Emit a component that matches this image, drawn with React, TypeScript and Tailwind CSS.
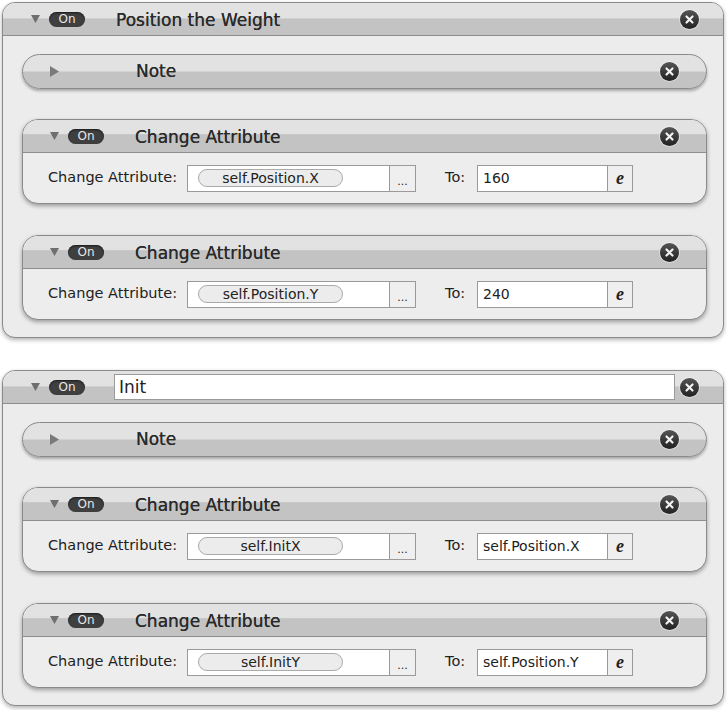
const font = { fontFamily: '"DejaVu Sans", "Liberation Sans", sans-serif' }

function CloseButton() {
  return (
    <div className="flex h-[19px] w-[19px] shrink-0 items-center justify-center rounded-full bg-gradient-to-b from-[#555] to-[#222] shadow-[0_0_0_1px_rgba(255,255,255,0.4)]">
      <svg width="11" height="11" viewBox="0 0 11 11">
        <path d="M2.5 2.5 L8.5 8.5 M8.5 2.5 L2.5 8.5" stroke="#f2f2f2" strokeWidth="2.2" strokeLinecap="round" />
      </svg>
    </div>
  )
}

function OnPill() {
  return (
    <div className="flex h-[15px] w-[36px] shrink-0 items-center justify-center rounded-full bg-[#3f3f3f] text-[12px] leading-none text-[#e8e8e8] shadow-[inset_0_1px_2px_rgba(0,0,0,0.6)]">
      On
    </div>
  )
}

function TriangleDown() {
  return (
    <svg width="9" height="8" viewBox="0 0 9 8" className="shrink-0">
      <path d="M0 0 L9 0 L4.5 8 Z" fill="#6e6e6e" />
    </svg>
  )
}

function TriangleRight() {
  return (
    <svg width="9" height="11" viewBox="0 0 9 11" className="shrink-0">
      <path d="M0 0 L9 5.5 L0 11 Z" fill="#7a7a7a" />
    </svg>
  )
}

function NoteRow() {
  return (
    <div className="flex h-[35px] items-center rounded-full border border-[#8a8a8a] bg-[linear-gradient(#e2e2e2_0%,#e2e2e2_48%,#c3c3c3_52%,#c3c3c3_100%)] pl-[27px] pr-[27px] shadow-[0_2px_3px_rgba(0,0,0,0.3)]">
      <TriangleRight />
      <div className="ml-[77px] pt-[1px] text-[17px] text-[#2a2a2a] [text-shadow:0_0_0.6px_#2a2a2a]">Note</div>
      <div className="flex-1" />
      <CloseButton />
    </div>
  )
}

function ChangeCard({ attr, to }: { attr: string; to: string }) {
  return (
    <div className="overflow-hidden rounded-[16px] border border-[#8a8a8a] bg-[#ededed] shadow-[0_2px_4px_rgba(0,0,0,0.35)]">
      <div className="flex h-[33px] items-center border-b border-[#8e8e8e] bg-[linear-gradient(#e2e2e2_0%,#e2e2e2_42%,#c3c3c3_46%,#c3c3c3_100%)] pl-[27px] pr-[27px]">
        <TriangleDown />
        <div className="ml-[9px]">
          <OnPill />
        </div>
        <div className="ml-[31px] pt-[3px] text-[17px] text-[#2a2a2a] [text-shadow:0_0_0.4px_#2a2a2a]">Change Attribute</div>
        <div className="flex-1" />
        <CloseButton />
      </div>
      <div className="flex h-[50px] items-center pl-[25px] text-[14.5px] text-[#222]">
        <div className="w-[139px]">Change Attribute:</div>
        <div className="flex h-[27px] w-[203px] items-center border border-[#9a9a9a] bg-white pl-[10px]">
          <div className="flex h-[18px] w-[145px] items-center justify-center rounded-full border border-[#aaa] bg-[#ececec] text-[14px] text-[#222]">
            {attr}
          </div>
        </div>
        <div className="flex h-[27px] w-[26px] items-end justify-center border border-l-0 border-[#9a9a9a] bg-[#efefef] pb-[4px] text-[11px] leading-none">
          ...
        </div>
        <div className="ml-[29px] w-[32px]">To:</div>
        <div className="flex h-[27px] w-[131px] items-center border border-[#9a9a9a] bg-white pl-[5px] text-[14px]">
          {to}
        </div>
        <div className="flex h-[27px] w-[25px] items-center justify-center border border-l-0 border-[#9a9a9a] bg-[#efefef]">
          <span className="text-[18px] font-bold italic leading-none text-[#222]" style={{ fontFamily: '"Liberation Serif", serif' }}>
            e
          </span>
        </div>
      </div>
    </div>
  )
}

function Panel({
  title,
  editable,
  cards,
}: {
  title: string
  editable?: boolean
  cards: { attr: string; to: string }[]
}) {
  return (
    <div className="overflow-hidden rounded-[13px] border border-[#8a8a8a] bg-[#ececec] shadow-[0_2px_4px_rgba(0,0,0,0.3)]">
      <div className="flex h-[33px] items-center border-b border-[#8e8e8e] bg-[linear-gradient(#e2e2e2_0%,#e2e2e2_46%,#c3c3c3_50%,#c3c3c3_100%)] pl-[28px] pr-[24px]">
        <TriangleDown />
        <div className="ml-[9px]">
          <OnPill />
        </div>
        {editable ? (
          <div className="ml-[29px] flex h-[26px] flex-1 items-center border border-[#9a9a9a] bg-white pl-[4px] pt-[2px] text-[17px] text-[#222]">
            {title}
          </div>
        ) : (
          <div className="ml-[31px] flex-1 pt-[3px] text-[17px] text-[#2a2a2a] [text-shadow:0_0_0.4px_#2a2a2a]">{title}</div>
        )}
        <div className="ml-[5px]">
          <CloseButton />
        </div>
      </div>
      <div className="flex flex-col pb-[17px] pl-[19px] pr-[16px] pt-[18px]">
        <NoteRow />
        <div className="mt-[30px]">
          <ChangeCard attr={cards[0].attr} to={cards[0].to} />
        </div>
        <div className="mt-[31px]">
          <ChangeCard attr={cards[1].attr} to={cards[1].to} />
        </div>
      </div>
    </div>
  )
}

export default function App() {
  return (
    <div className="h-[710px] w-[727px] bg-white pl-[2px] pr-[3px] pt-[2px]" style={font}>
      <Panel
        title="Position the Weight"
        cards={[
          { attr: "self.Position.X", to: "160" },
          { attr: "self.Position.Y", to: "240" },
        ]}
      />
      <div className="mt-[32px]">
        <Panel
          title="Init"
          editable
          cards={[
            { attr: "self.InitX", to: "self.Position.X" },
            { attr: "self.InitY", to: "self.Position.Y" },
          ]}
        />
      </div>
    </div>
  )
}
